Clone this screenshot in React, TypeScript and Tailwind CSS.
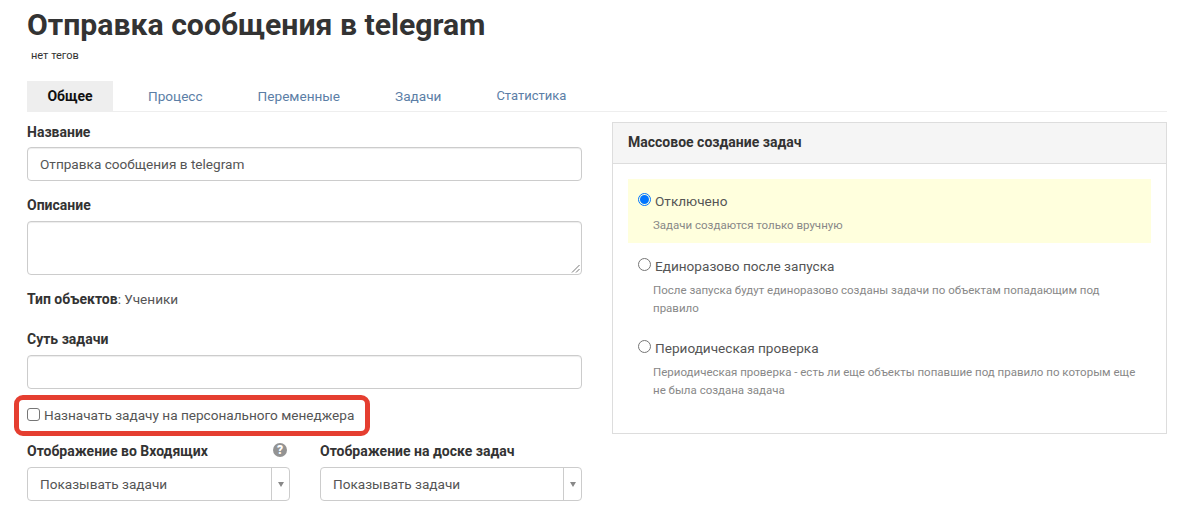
const font = { fontFamily: '"Roboto", "Liberation Sans", sans-serif' };

function Tab({ label, active, small }: { label: string; active?: boolean; small?: boolean }) {
  if (active) {
    return <div className="mr-[35px] h-[30px] w-[86px] bg-[#eeeeee] text-center text-[14px] leading-[30px] font-bold text-[#111111]">{label}</div>;
  }
  return <div className={`mr-[55px] h-[30px] leading-[30px] text-[#5b7ea6] ${small ? "text-[13px]" : "text-[13.6px]"}`}>{label}</div>;
}

function Label({ children }: { children: React.ReactNode }) {
  return <div className="text-[14px] leading-[20px] font-bold text-[#333333]">{children}</div>;
}

function Input({ value }: { value?: string }) {
  return (
    <div className="h-[34px] rounded-[4px] border border-[#cccccc] px-[12px] text-[13.6px] leading-[32px] text-[#555555] shadow-[inset_0_1px_1px_rgba(0,0,0,0.075)]">
      {value}
    </div>
  );
}

function SelectBox() {
  return (
    <div className="flex h-[34px] rounded-[4px] border border-[#cccccc] text-[13.6px] leading-[32px] text-[#555555]">
      <div className="flex-1 px-[12px]">Показывать задачи</div>
      <div className="flex w-[18px] items-center justify-center border-l border-[#cccccc]">
        <div className="h-0 w-0 border-x-[3px] border-t-[5px] border-x-transparent border-t-[#888888]" />
      </div>
    </div>
  );
}

function Radio({ checked }: { checked?: boolean }) {
  return checked ? (
    <div className="flex h-[13px] w-[13px] shrink-0 items-center justify-center rounded-full border border-[#0075ff]">
      <div className="h-[9px] w-[9px] rounded-full bg-[#0075ff]" />
    </div>
  ) : (
    <div className="h-[13px] w-[13px] shrink-0 rounded-full border border-[#767676] bg-white" />
  );
}

function Option({ title, desc, checked, top }: { title: string; desc: React.ReactNode; checked?: boolean; top: string }) {
  return (
    <div className={`${top} pl-[10px] pr-[8px] ${checked ? "h-[64px] bg-[#ffffdd]" : ""}`}>
      <div className="flex items-center gap-[4px] text-[13.6px] leading-[20px] text-[#555555]">
        <div className="-mt-[3px]"><Radio checked={checked} /></div>
        <span>{title}</span>
      </div>
      <div className="mt-[5px] pl-[15px] text-[11.5px] leading-[18px] text-[#888888]">{desc}</div>
    </div>
  );
}

export default function App() {
  return (
    <div className="h-[513px] w-[1194px] overflow-hidden bg-white px-[27px]" style={font}>
      <h1 className="pt-[8px] text-[30.2px] leading-[34px] font-bold text-[#333333]">Отправка сообщения в telegram</h1>
      <div className="mt-[6px] pl-[4px] text-[11px] leading-[16px] text-[#333333]">нет тегов</div>
      <div className="mt-[17px] flex border-b border-[#eeeeee]">
        <Tab label="Общее" active />
        <Tab label="Процесс" />
        <Tab label="Переменные" />
        <Tab label="Задачи" />
        <Tab label="Статистика" small />
      </div>
      <div className="flex gap-[30px]">
        <div className="w-[555px]">
          <div className="mt-[10px]"><Label>Название</Label></div>
          <div className="mt-[5px]"><Input value="Отправка сообщения в telegram" /></div>
          <div className="mt-[14px]"><Label>Описание</Label></div>
          <div className="relative mt-[6px] h-[54px] rounded-[4px] border border-[#cccccc] shadow-[inset_0_1px_1px_rgba(0,0,0,0.075)]">
            <svg className="absolute right-[1px] bottom-[1px]" width="9" height="9" viewBox="0 0 9 9">
              <path d="M8.5 1 L1 8.5 M8.5 5 L5 8.5" stroke="#777" strokeWidth="1" fill="none" />
            </svg>
          </div>
          <div className="mt-[14px] text-[13.6px] leading-[20px] text-[#555555]">
            <b className="text-[14px] text-[#333333]">Тип объектов</b>: Ученики
          </div>
          <div className="mt-[20px]"><Label>Суть задачи</Label></div>
          <div className="mt-[6px]"><Input /></div>
          <div className="mt-[6px] -ml-[13px] flex h-[41px] w-[356px] items-center gap-[4px] rounded-[9px] border-[5px] border-[#e53e30] pl-[8px] text-[13.6px] text-[#555555]">
            <div className="-mt-[3px] h-[13px] w-[13px] shrink-0 rounded-[3px] border border-[#767676]" />
            <span>Назначать задачу на персонального менеджера</span>
          </div>
          <div className="mt-[5px] flex gap-[30px]">
            <div className="w-[263px]">
              <div className="flex items-center justify-between pr-[3px]">
                <Label>Отображение во Входящих</Label>
                <svg width="14" height="14" viewBox="0 0 14 14" className="-mt-[2px]">
                  <circle cx="7" cy="7" r="7" fill="#939393" />
                  <text x="7" y="11.2" textAnchor="middle" fontSize="12" fontWeight="900" fill="#ffffff">?</text>
                </svg>
              </div>
              <div className="mt-[6px]"><SelectBox /></div>
            </div>
            <div className="w-[262px]">
              <Label>Отображение на доске задач</Label>
              <div className="mt-[6px]"><SelectBox /></div>
            </div>
          </div>
        </div>
        <div className="mt-[10px] h-[312px] w-[555px] border border-[#dddddd]">
          <div className="h-[41px] border-b border-[#dddddd] bg-[#f5f5f5] pl-[15px] text-[14px] leading-[39px] font-bold text-[#333333]">Массовое создание задач</div>
          <div className="mx-[15px] mt-[15px]">
            <Option checked top="pt-[12px]" title="Отключено" desc="Задачи создаются только вручную" />
            <Option top="pt-[13px]" title="Единоразово после запуска" desc="После запуска будут единоразово созданы задачи по объектам попадающим под правило" />
            <Option top="pt-[21px]" title="Периодическая проверка" desc="Периодическая проверка - есть ли еще объекты попавшие под правило по которым еще не была создана задача" />
          </div>
        </div>
      </div>
    </div>
  );
}
